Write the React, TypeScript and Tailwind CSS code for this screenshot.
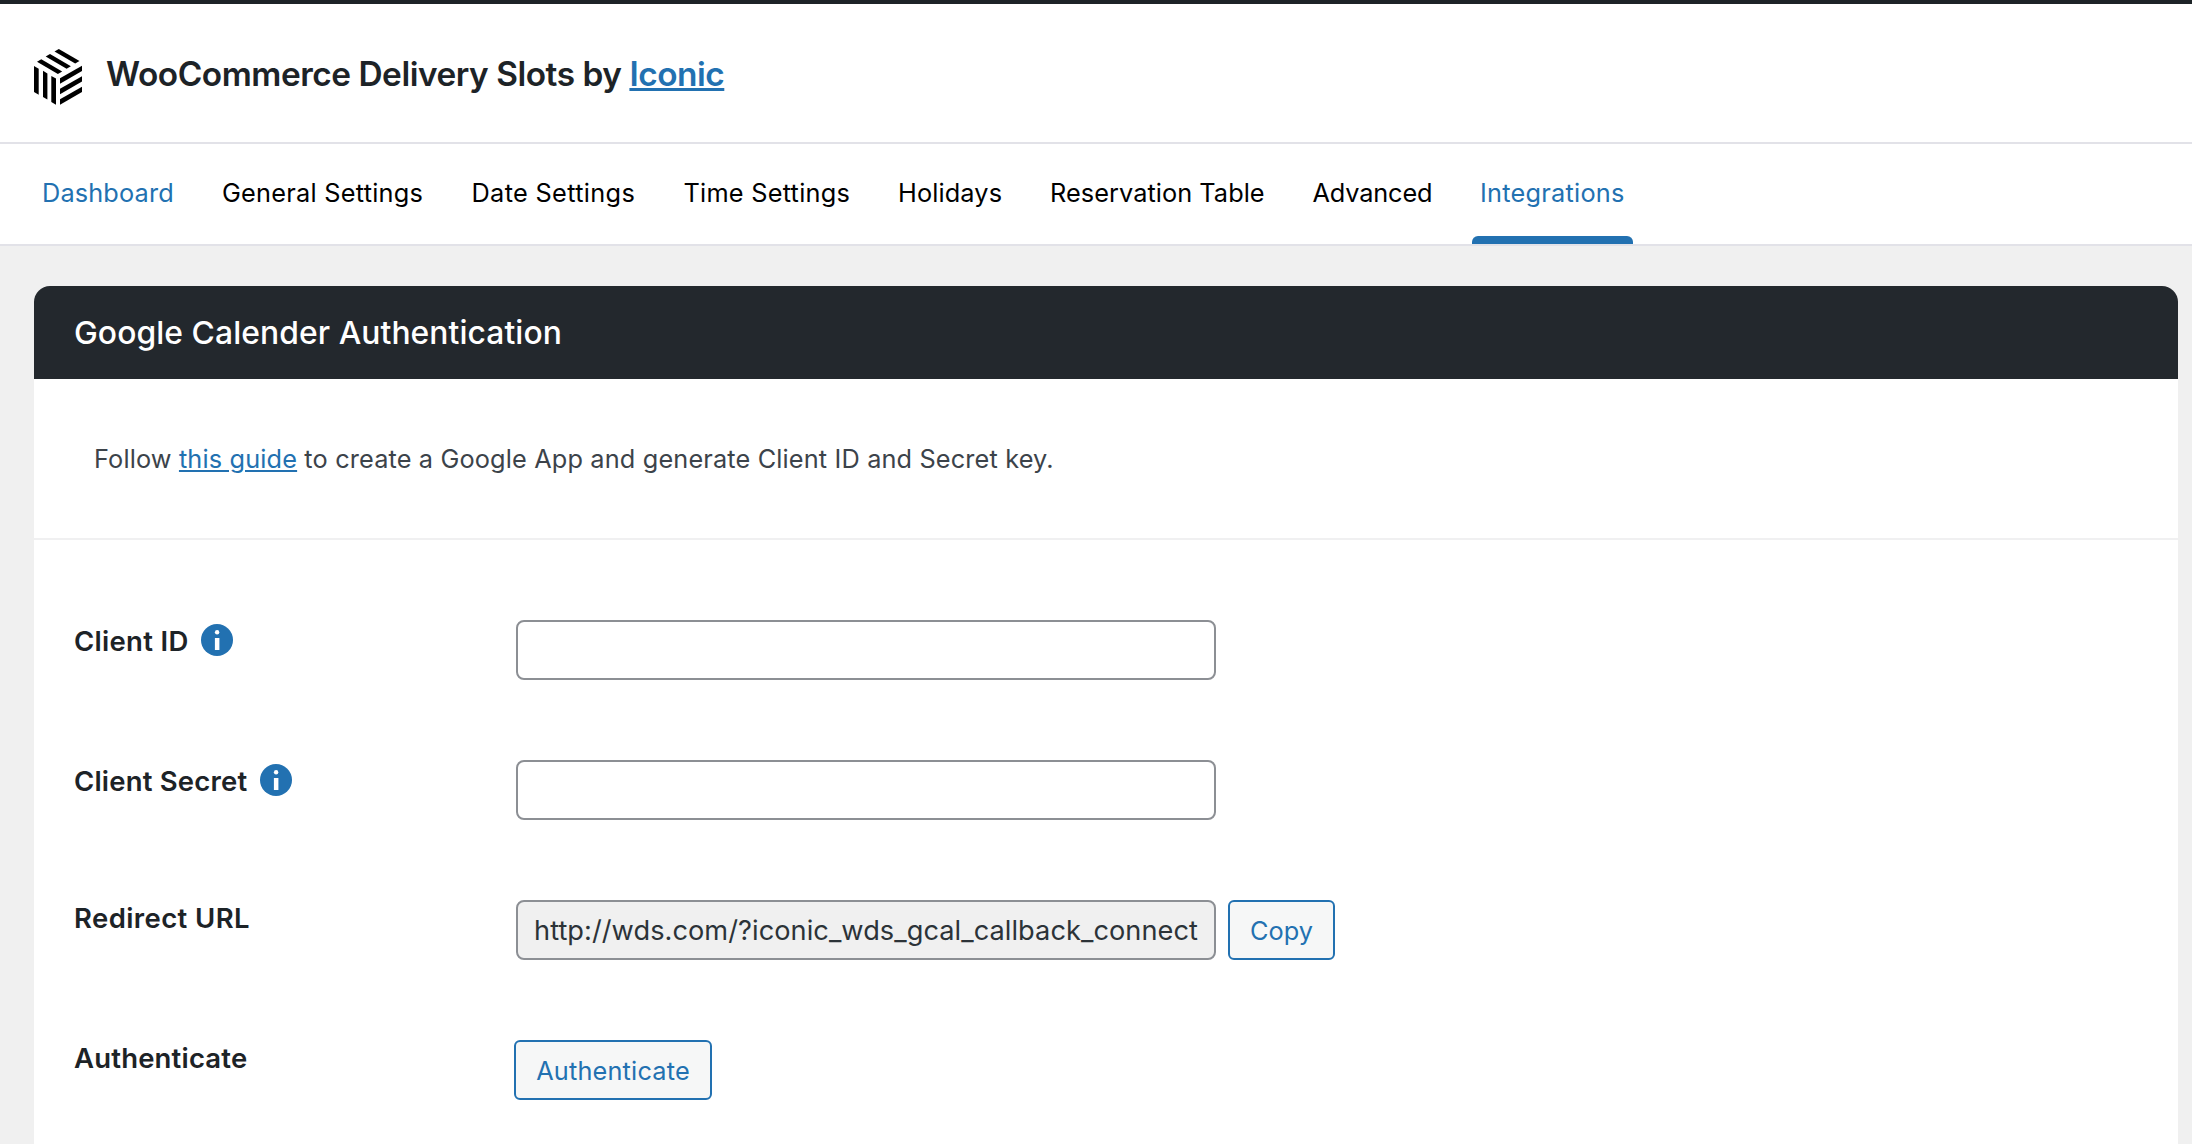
import type { ReactNode } from 'react';

const TABS = [
  { label: 'Dashboard', size: 'w-[132px] tracking-[0.15px]', color: 'text-[#2271b1]' },
  { label: 'General Settings', size: 'w-[201.5px] tracking-[0.25px]', color: 'text-black' },
  { label: 'Date Settings', size: 'w-[164px] tracking-[0.34px]', color: 'text-black' },
  { label: 'Time Settings', size: 'w-[166.5px] tracking-[0.25px]', color: 'text-black' },
  { label: 'Holidays', size: 'w-[104px] tracking-[0.13px]', color: 'text-black' },
  { label: 'Reservation Table', size: 'w-[214.5px] tracking-[0.06px]', color: 'text-black' },
  { label: 'Advanced', size: 'w-[119.5px] tracking-[-0.14px]', color: 'text-black' },
  { label: 'Integrations', size: 'w-[145px] tracking-[0.25px]', color: 'text-[#2271b1]', active: true },
];

function Logo() {
  return (
    <svg className="mt-[45px] h-14 w-12 shrink-0" viewBox="0 0 48 56" fill="#000">
      <path d="M0 17l4.7 2.7v26L0 43z" />
      <path d="M9 21.8l4.4 2.6v26.2L9 48z" />
      <path d="M17.3 27l4.7 2.6v26.2L17.3 53z" />
      <path d="M3 12.7l4.3-2.5 20.9 12.2-4.3 2.5z" />
      <path d="M11.7 7.5L16 5l20.9 12.2-4.3 2.5z" />
      <path d="M20.5 2.5L24.8 0l20.7 12.1-4.3 2.5z" />
      <path d="M26 29.2l22-12.4v5.3L26 34.8z" />
      <path d="M26 39.7l22-12.4v5.3L26 45.3z" />
      <path d="M26 50.2l22-12.4v5.3L26 55.8z" />
    </svg>
  );
}

function InfoIcon() {
  return (
    <svg className="h-8 w-8 shrink-0" viewBox="0 0 32 32">
      <circle cx="16" cy="16" r="16" fill="#2271b1" />
      <circle cx="16.1" cy="8.3" r="2.2" fill="#fff" />
      <rect x="13.9" y="14" width="4.5" height="12" fill="#fff" />
    </svg>
  );
}

function Row({ label, info, tracking, children }: { label: string; info?: string; tracking: string; children: ReactNode }) {
  return (
    <div className="flex h-[60px] items-start">
      <div className={`flex w-[442px] shrink-0 items-start ${info ? 'pt-[3px]' : ''}`}>
        <span className={`text-[27.5px] leading-9 font-semibold whitespace-nowrap text-[#1d2327] ${tracking} ${info ?? ''}`}>{label}</span>
        {info && <span className="mt-px"><InfoIcon /></span>}
      </div>
      {children}
    </div>
  );
}

const FIELD = 'h-[60px] w-[700px] rounded-lg border-2 border-[#8c8f94]';
const BUTTON =
  'flex h-[60px] items-center justify-center rounded-md border-2 border-[#2271b1] bg-[#f6f7f7] pt-0.5 text-[25.3px] text-[#2271b1]';

export default function App() {
  return (
    <div className="flex h-[1144px] w-[2192px] flex-col overflow-hidden bg-[#f0f0f0] font-['Inter',sans-serif]">
      <div className="h-1 shrink-0 bg-[#1d2327]" />
      <header className="flex h-[140px] shrink-0 items-start border-b-2 border-[#e2e2e8] bg-white pl-[34px]">
        <Logo />
        <h1 className="mt-[54px] ml-6 text-[33.4px] leading-8 font-semibold tracking-[-0.46px] whitespace-nowrap text-[#1d2327]">
          WooCommerce Delivery Slots by{' '}
          <a className="text-[#2271b1] underline decoration-[3px] underline-offset-[2px]">Iconic</a>
        </h1>
      </header>

      <nav className="flex h-[102px] shrink-0 gap-8 border-b-2 border-[#e2e2e8] bg-white pl-[34px]">
        {TABS.map((t) => (
          <a key={t.label} className={`flex flex-col px-2 ${t.color}`}>
            <span className={`box-content h-[92px] text-[25.3px] leading-[98px] whitespace-nowrap ${t.size}`}>{t.label}</span>
            {t.active && <span className="-mx-2 h-2 rounded-t-md bg-[#2271b1]" />}
          </a>
        ))}
      </nav>

      <main className="mt-10 mr-[14px] ml-[34px] flex-1 overflow-hidden rounded-t-2xl bg-white">
        <h2 className="h-[93px] bg-[#23282d] pl-10 text-[31.8px] leading-[93px] font-medium tracking-[0.08px] text-white">
          Google Calender Authentication
        </h2>
        <p className="h-[161px] border-b-2 border-[#f0f0f1] pl-[60px] text-[25.3px] leading-[159px] tracking-[0.15px] text-[#3c434a]">
          Follow <a className="text-[#2271b1] underline decoration-2 underline-offset-[2px]">this guide</a> to create a Google
          App and generate Client ID and Secret key.
        </p>
        <div className="flex flex-col gap-20 pt-20 pl-10">
          <Row label="Client ID" info="w-[126.5px]" tracking="tracking-[0.3px]">
            <input className={`${FIELD} bg-white`} />
          </Row>
          <Row label="Client Secret" info="w-[186.2px]" tracking="tracking-[0.2px]">
            <input className={`${FIELD} bg-white`} />
          </Row>
          <Row label="Redirect URL" tracking="tracking-[0.4px]">
            <div className={`${FIELD} bg-[#f0f0f0] px-4`}>
              <div className="h-14 text-[27.2px] leading-[57px] tracking-[0.05px] whitespace-nowrap text-[#2c3338]">
                http://wds.com/?iconic_wds_gcal_callback_connect
              </div>
            </div>
            <button className={`${BUTTON} ml-3 w-[107px]`}>Copy</button>
          </Row>
          <Row label="Authenticate" tracking="tracking-[0.18px]">
            <button className={`${BUTTON} -ml-0.5 w-[198px] tracking-[0.19px]`}>Authenticate</button>
          </Row>
        </div>
      </main>
    </div>
  );
}
